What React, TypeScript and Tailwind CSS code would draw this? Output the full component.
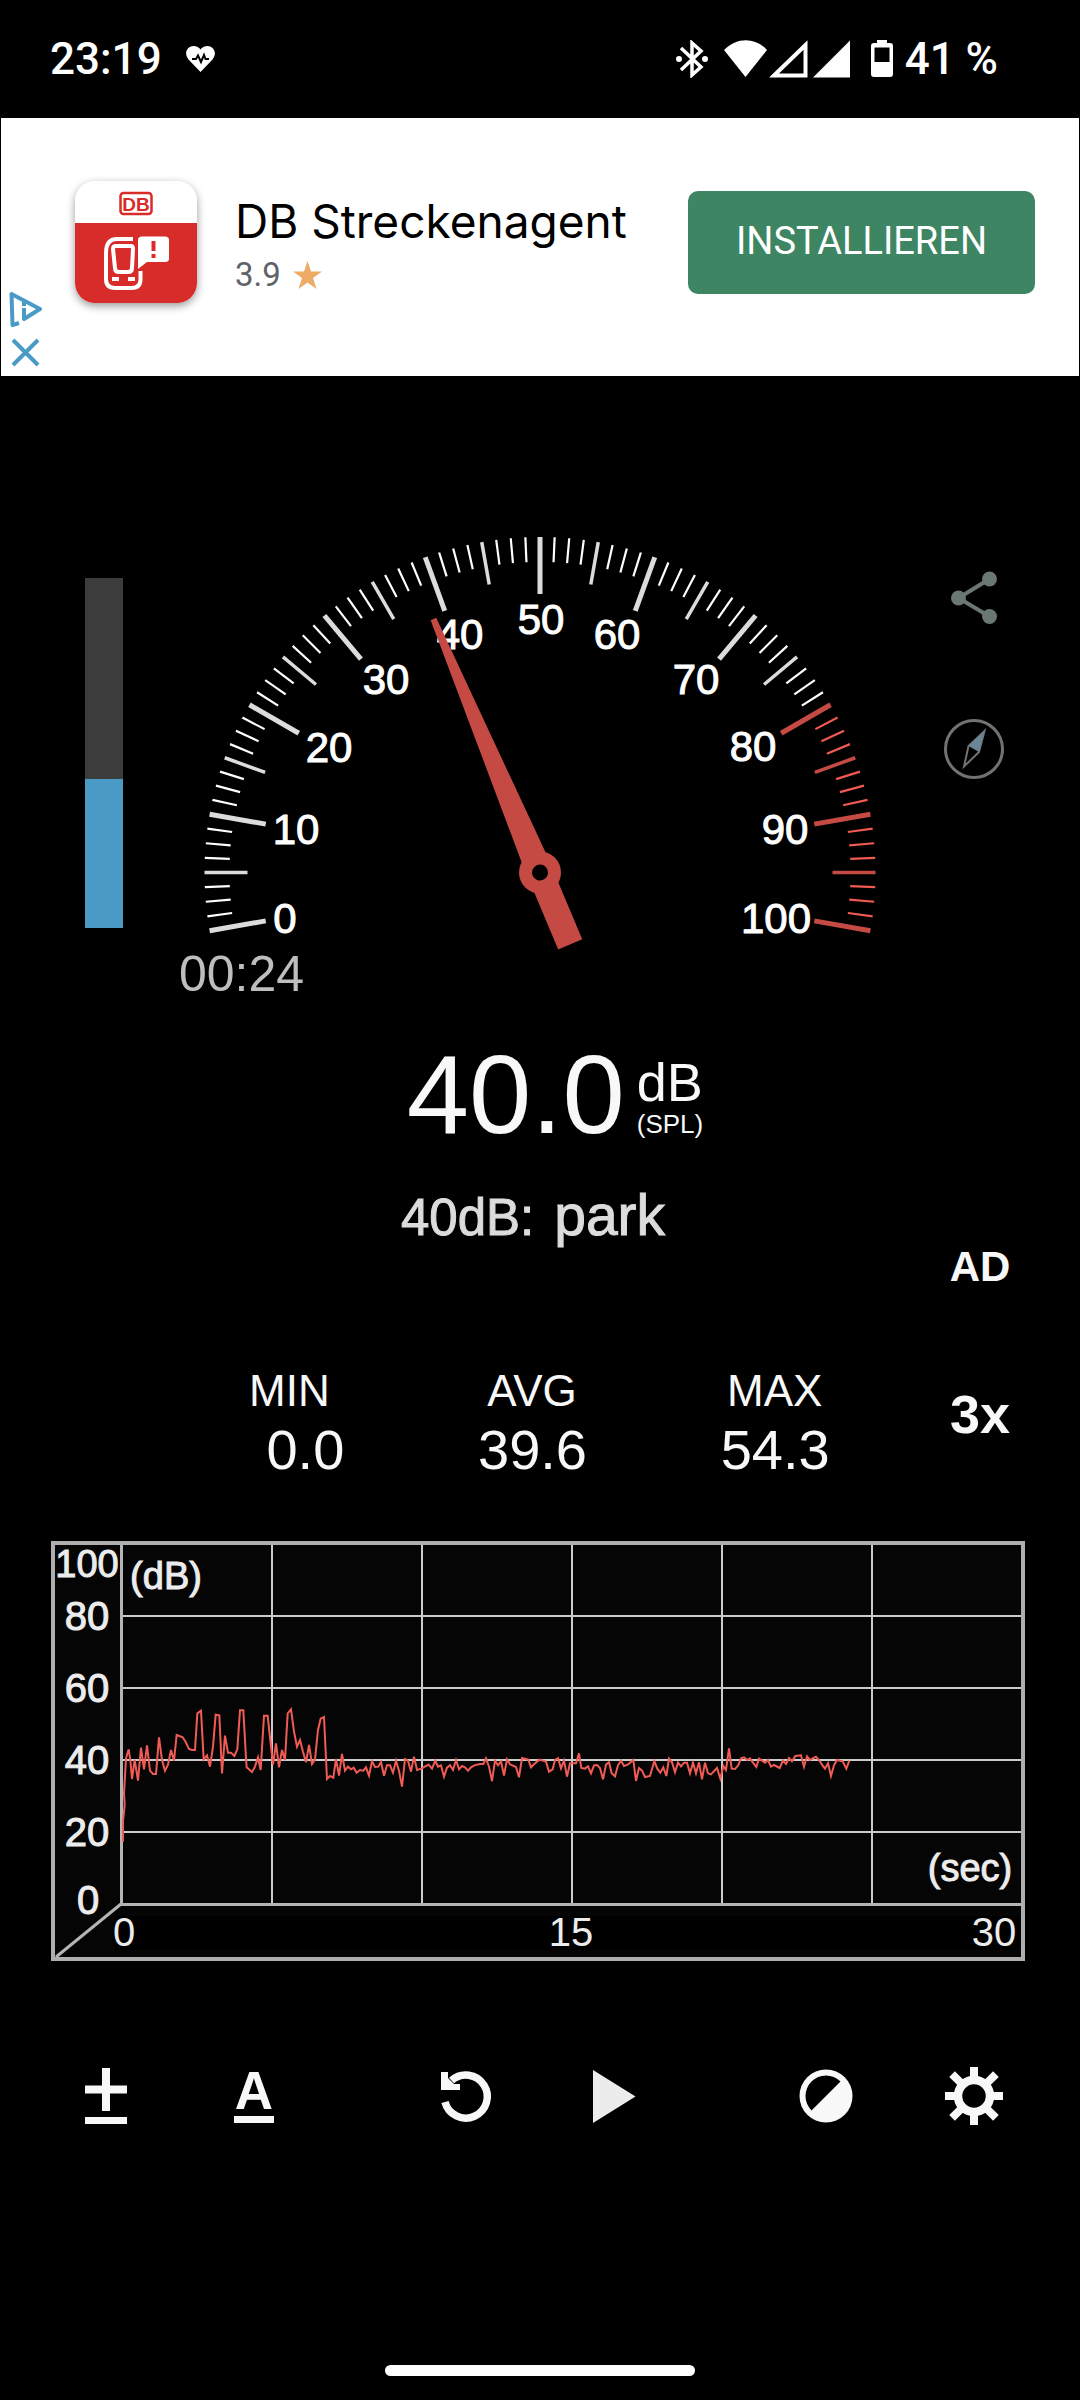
import type { ReactNode } from "react";

const WHITE = "#f8f8f8";
const RED = "#c64a44";

const gaugeLabels = [
  { text: "0", x: 285, y: 933 },
  { text: "10", x: 296, y: 844 },
  { text: "20", x: 329, y: 762 },
  { text: "30", x: 386, y: 694 },
  { text: "40", x: 460, y: 649 },
  { text: "50", x: 541, y: 634 },
  { text: "60", x: 617, y: 649 },
  { text: "70", x: 696, y: 694 },
  { text: "80", x: 753, y: 761 },
  { text: "90", x: 785, y: 844 },
  { text: "100", x: 776, y: 933 },
];

const stats = [
  { label: "MIN", value: "0.0" },
  { label: "AVG", value: "39.6" },
  { label: "MAX", value: "54.3" },
];

// recorded levels, three units per chart pixel
const trace =
  "249,935 249,875 254,825 252,790 258,685 266,658 271,690 276,747 284,690 294,752 303,653 312,718 321,646 330,722 339,732 348,732 357,622 366,690 375,722 384,704 393,660 402,692 410,615 428,622 437,636 447,657 456,660 465,660 472,550 483,542 491,688 501,676 510,710 519,650 527,554 538,556 546,730 555,617 564,668 573,668 583,678 592,658 600,541 610,541 618,684 620,712 636,726 645,710 654,682 662,720 672,557 683,557 690,622 699,704 708,640 717,712 726,660 735,690 743,550 753,538 762,604 771,650 780,630 789,665 798,697 807,645 816,702 825,688 834,600 842,566 852,561 861,747 870,738 880,743 888,687 897,737 906,672 915,722 924,710 933,718 941,713 950,728 960,720 970,722 978,712 987,737 996,694 1005,711 1015,710 1023,696 1032,737 1041,706 1050,706 1059,728 1068,692 1077,722 1086,770 1095,687 1104,692 1113,725 1122,680 1131,720 1146,715 1158,708 1166,704 1176,716 1186,692 1194,710 1203,706 1212,740 1221,713 1230,706 1239,720 1248,690 1257,718 1266,708 1275,712 1284,722 1293,712 1303,706 1320,702 1330,702 1338,685 1347,710 1356,753 1365,692 1374,706 1383,694 1392,737 1401,688 1410,703 1428,711 1437,742 1446,684 1465,689 1473,712 1482,703 1498,689 1518,695 1527,725 1538,718 1545,690 1554,685 1563,715 1572,692 1581,740 1590,700 1608,700 1617,670 1624,714 1635,716 1644,709 1653,730 1662,706 1671,705 1680,714 1689,748 1698,704 1707,697 1715,730 1725,739 1734,706 1743,692 1752,708 1763,704 1780,690 1788,753 1797,714 1806,722 1815,741 1830,738 1843,694 1852,716 1861,728 1870,712 1879,738 1887,686 1896,697 1905,727 1914,698 1923,709 1932,698 1941,698 1950,730 1959,698 1968,730 1977,697 1986,748 1995,698 2004,730 2013,733 2031,714 2041,746 2050,708 2058,720 2067,655 2075,716 2085,717 2095,706 2103,685 2112,682 2122,690 2130,685 2139,698 2149,711 2157,686 2175,698 2184,690 2193,710 2202,705 2219,714 2229,692 2238,702 2247,684 2256,694 2266,678 2283,676 2292,710 2301,679 2310,690 2328,680 2337,690 2346,704 2355,716 2364,700 2373,738 2382,706 2391,690 2408,694 2419,716 2428,692";

const StatusBar = () => (
  <header className="flex items-center justify-between pt-8 pb-8 pl-[50px] pr-[82px] font-['Roboto',sans-serif] text-[44px] leading-[54px] font-medium text-white">
    <div className="flex items-center gap-6">
      <span>23:19</span>
      <svg width="29" height="26" viewBox="0 0 29 26">
        <path d="M14.500 26 L2.500 13.500 C-3 6.500 2 0 7.500 0 C10.500 0 13 1.500 14.500 3.500 C16 1.500 18.500 0 21.500 0 C27 0 32 6.500 26.500 13.500 Z" fill="#fff" />
        <path d="M6 13 H10 L12 9.500 L15 16 L18 9 L19.500 13 H23" fill="none" stroke="#000" strokeWidth="2" />
      </svg>
    </div>
    <div className="flex items-center">
      <svg width="32" height="38" viewBox="0 0 32 38">
        <path d="M5 8 L25 27 L16 35 V3 L25 11 L5 30" fill="none" stroke="#fff" strokeWidth="3.500" />
        <circle cx="3" cy="19" r="3" fill="#fff" />
        <circle cx="29" cy="19" r="3" fill="#fff" />
      </svg>
      <svg className="ml-4" width="127" height="38" viewBox="0 0 127 38">
        <path d="M0 10 C13 -3 31 -3 43 10 L21.500 37 Z" fill="#fff" />
        <path d="M50 35.500 L81.500 5 V35.500 Z" fill="none" stroke="#fff" strokeWidth="4" />
        <path d="M89 37.500 L126 0.500 V37.500 Z" fill="#fff" />
      </svg>
      <svg className="ml-5" width="22" height="38" viewBox="0 0 22 38">
        <path fillRule="evenodd" d="M6 0 H16 V3 H19 Q22 3 22 6 V34 Q22 37 19 37 H3 Q0 37 0 34 V6 Q0 3 3 3 H6 Z M3.500 7.500 V22 H18.500 V7.500 Z" fill="#fff" />
      </svg>
      <span className="ml-3">41 %</span>
    </div>
  </header>
);

const AdBanner = () => (
  <aside className="relative mx-px flex items-start bg-white pt-[63px] pb-[73px] pl-[74px] pr-11 font-['Roboto',sans-serif]">
    <svg className="shrink-0 rounded-[20px] shadow-[0_3px_8px_rgba(0,0,0,0.4)]" width="122" height="122" viewBox="0 0 122 122" role="img" aria-label="DB Streckenagent">
      <rect width="122" height="122" fill="#fff" />
      <rect y="42" width="122" height="80" fill="#d82c2a" />
      <rect x="45.500" y="12" width="31" height="21" rx="3" fill="none" stroke="#d82c2a" strokeWidth="2.500" />
      <text x="61" y="29.500" textAnchor="middle" fontFamily="Liberation Sans, sans-serif" fontWeight="bold" fontSize="19" fill="#d82c2a">DB</text>
      <path d="M58 58 H42 Q31 58 31 72 V98 Q31 107 40 107 H57 Q65.500 107 65.500 98 V90" fill="none" stroke="#fff" strokeWidth="4" />
      <path d="M41 65 H56 Q58 65 58 68 L57 87 Q57 91 53 91 H44 Q40 91 40 87 L38 68 Q38 65 41 65 Z" fill="none" stroke="#fff" strokeWidth="4" />
      <path d="M37 98 H44 M53 98 H60" stroke="#fff" strokeWidth="4" />
      <path d="M67 55.500 H90 Q94 55.500 94 59 V78 Q94 81 90 81 H72 L63 88 V59 Q63 55.500 67 55.500 Z" fill="#fff" />
      <path d="M78.500 60 V70 M78.500 73 V77" stroke="#d82c2a" strokeWidth="4" />
    </svg>
    <div className="ml-[38px] mt-4">
      <div className="font-['Inter',sans-serif] text-[46px] leading-[48px] text-black">DB Streckenagent</div>
      <div className="mt-[10px] flex items-center gap-3 text-[33px] leading-10 text-[#5f6368]">
        3.9
        <svg width="29" height="28" viewBox="0 0 29 28">
          <path d="M14.500 0 L18 10.500 H29 L20 17 L23.500 28 L14.500 21.500 L5.500 28 L9 17 L0 10.500 H11 Z" fill="#edab66" />
        </svg>
      </div>
    </div>
    <button className="ml-auto mt-[10px] rounded-[10px] bg-[#3d8563] px-12 pt-7 pb-[31px] text-[38px] leading-[44px] text-white">INSTALLIEREN</button>
    <a href="#adchoices" aria-label="AdChoices" className="absolute bottom-[49px] left-2">
      <svg className="block" width="34" height="36" viewBox="0 0 34 36" fill="none" stroke="#4a9ac6" strokeWidth="4">
        <path d="M10 32 L3.500 34 L2.500 3 L31 18 L15 28 V17" strokeLinejoin="round" />
        <path d="M15 11 V15" />
      </svg>
    </a>
    <button aria-label="Close" className="absolute bottom-[9px] left-[10px]">
      <svg className="block" width="29" height="29" viewBox="0 0 29 29">
        <path d="M2 2 L27 27 M27 2 L2 27" stroke="#4a9ac6" strokeWidth="4" />
      </svg>
    </button>
  </aside>
);

const Gauge = () => (
  <svg className="block w-full overflow-visible" viewBox="179 530 722 426" role="img" aria-label="38.6 dB">
    {Array.from({ length: 81 }, (_, i) => {
      const major = i % 8 === 0;
      const mid = i % 4 === 0;
      const red = i >= 64;
      return (
        <line
          key={i}
          x1="540"
          x2="540"
          y1="537"
          y2={major ? 594 : mid ? 580 : 562}
          stroke={red ? (mid ? RED : "#f05a52") : mid ? "#dcdcdc" : "#fff"}
          strokeWidth={major ? 5 : mid ? 3.5 : 2.2}
          transform={`rotate(${-100 + i * 2.5} 540 872.5)`}
        />
      );
    })}
    {gaugeLabels.map((l) => (
      <text key={l.text} x={l.x} y={l.y} textAnchor="middle" fontFamily="Liberation Sans, sans-serif" fontSize="42" fill="#fff" stroke="#fff" strokeWidth="1">
        {l.text}
      </text>
    ))}
    <g transform="translate(540 872.5) rotate(-22.8)">
      <polygon points="-3,-275 3,-275 13,-14 13,78 -13,78 -13,-14" fill={RED} />
      <circle r="21" fill={RED} />
      <circle r="8" fill="#000" />
    </g>
  </svg>
);

const LevelChart = () => (
  <svg className="block w-full" viewBox="51 1541 974 420" role="img" aria-label="Sound level over time">
    <rect x="53" y="1543" width="970" height="416" fill="#050505" stroke="#aeaeae" strokeWidth="4" />
    <rect x="114" y="1916" width="905" height="34" fill="#000" />
    <path d="M272 1545 V1904 M422 1545 V1904 M572 1545 V1904 M722 1545 V1904 M872 1545 V1904 M122 1616 H1021 M122 1688 H1021 M122 1760 H1021 M122 1832 H1021" stroke="#cbcbcb" strokeWidth="2" />
    <path d="M121.500 1545 V1904.500 H1021 M121 1904 L56 1957" fill="none" stroke="#b4b4b4" strokeWidth="3" />
    <g transform="translate(40 1530) scale(0.33333)">
      <polyline points={trace} fill="none" stroke="#f05c55" strokeWidth="6" />
    </g>
    <g fontFamily="Liberation Sans, sans-serif" fontSize="40" fill="#ececec" textAnchor="middle">
      <g stroke="#ececec" strokeWidth="1">
        <text x="87" y="1577" fontSize="38">100</text>
        <text x="87" y="1630">80</text>
        <text x="87" y="1702">60</text>
        <text x="87" y="1774">40</text>
        <text x="87" y="1846">20</text>
        <text x="88" y="1914">0</text>
        <text x="166" y="1589" fontSize="38">(dB)</text>
        <text x="970" y="1881" fontSize="38">(sec)</text>
      </g>
      <text x="124" y="1946">0</text>
      <text x="571" y="1946">15</text>
      <text x="994" y="1946">30</text>
    </g>
  </svg>
);

const IconButton = ({ label, children }: { label: string; children: ReactNode }) => (
  <button aria-label={label} className="block size-[60px] shrink-0">
    <svg className="block size-full" viewBox="-30 -30 60 60">
      {children}
    </svg>
  </button>
);

const Toolbar = () => (
  <nav className="mt-[105px] flex justify-between px-[76px]">
    <div className="flex gap-[88px]">
      <IconButton label="Calibrate">
        <path d="M0 -28 V15 M-21 -6.500 H21" stroke={WHITE} strokeWidth="8" />
        <path d="M-21 24.500 H21" stroke={WHITE} strokeWidth="7" />
      </IconButton>
      <IconButton label="Weighting">
        <text x="0" y="13" textAnchor="middle" fontFamily="Liberation Sans, sans-serif" fontWeight="bold" fontSize="53" fill={WHITE}>A</text>
        <path d="M-20 23.500 H20" stroke={WHITE} strokeWidth="7" />
      </IconButton>
    </div>
    <div className="flex gap-[88px]">
      <IconButton label="Reset">
        <path d="M-14.500 -15.500 A21.500 21.500 0 1 1 -21 6" fill="none" stroke={WHITE} strokeWidth="7.500" />
        <path d="M-25 -24 H-18 V-18 L-12 -12 H-6 V-6 H-25 Z" fill={WHITE} />
      </IconButton>
      <IconButton label="Start">
        <path d="M-21 -26 L21.500 0.500 L-21 27 Z" fill="#ececec" />
      </IconButton>
    </div>
    <div className="flex gap-[88px]">
      <IconButton label="Contrast">
        <circle r="26.500" fill={WHITE} />
        <path d="M-14.500 14.500 A20.500 20.500 0 0 1 14.500 -14.500 Z" fill="#000" />
      </IconButton>
      <IconButton label="Settings">
        <circle r="16" fill="none" stroke={WHITE} strokeWidth="8.500" />
        {[0, 45, 90, 135, 180, 225, 270, 315].map((a) => (
          <rect key={a} x="-4" y={a % 90 === 0 ? -29 : -31} width="8" height="13" fill={WHITE} transform={`rotate(${a})`} />
        ))}
      </IconButton>
    </div>
  </nav>
);

export default function App() {
  return (
    <div className="flex min-h-screen flex-col bg-black font-['Liberation_Sans',sans-serif] text-[#f8f8f8]">
      <StatusBar />
      <AdBanner />

      <main>
        <section className="flex items-start pt-[154px] pl-[85px] pr-[76px]">
          <div className="mt-12 flex h-[350px] w-[38px] shrink-0 flex-col justify-end bg-[#3c3c3c]">
            <div className="h-[149px] bg-[#4a9ac6]" />
          </div>
          <div className="ml-14 mr-[43px] flex-1">
            <Gauge />
            <div className="text-[50px] leading-9 text-[#bebebe]">00:24</div>
          </div>
          <div className="mt-[38px] flex flex-col gap-[91px]">
            <IconButton label="Share">
              <path d="M15.500 -19 L-15.500 0 L15.500 18.500" fill="none" stroke="#6b7774" strokeWidth="4" />
              <g fill="#6b7774">
                <circle cx="-15.500" cy="0" r="7.500" />
                <circle cx="15.500" cy="-19" r="7.500" />
                <circle cx="15.500" cy="18.500" r="7.500" />
              </g>
            </IconButton>
            <IconButton label="Compass">
              <circle r="28.500" fill="none" stroke="#707274" strokeWidth="3" />
              <path d="M10.500 -18 L-5.500 -3 L-10 17.500 L5 3 Z" fill="none" stroke="#707274" strokeWidth="2" />
              <path d="M10.500 -18 L-5.500 -3 L5 3 Z" fill="#6a8598" />
            </IconButton>
          </div>
        </section>

        <section className="mt-[45px] flex justify-center gap-3 pl-[30px]">
          <span className="text-[112px] leading-[116px]">40.0</span>
          <div className="flex flex-col gap-0.5 pt-[18px]">
            <span className="text-[54px] leading-[54px]">dB</span>
            <span className="text-[26px] leading-[26px]">(SPL)</span>
          </div>
        </section>

        <p className="mt-[35px] flex items-baseline justify-center gap-5 pr-[14px] leading-[54px] text-[#dcdcdc] [-webkit-text-stroke:1px_#dcdcdc]">
          <span className="text-[51px]">40dB:</span>
          <span className="text-[57px]">park</span>
        </p>

        <section className="flex items-start pl-[168px] pr-4">
          <dl className="grid flex-1 grid-cols-3 pt-[124px]">
            {stats.map((s) => (
              <div key={s.label} className="flex flex-col items-center gap-2">
                <dt className="text-[44px] leading-[44px]">{s.label}</dt>
                <dd className="w-[110px] text-right text-[56px] leading-[58px]">{s.value}</dd>
              </div>
            ))}
          </dl>
          <div className="flex w-[168px] flex-col items-center gap-[98px] font-bold">
            <button className="text-[42px] leading-[44px]">AD</button>
            <button className="text-[54px] leading-[54px]">3x</button>
          </div>
        </section>

        <section className="mt-[62px] pl-[51px] pr-[55px]">
          <LevelChart />
        </section>

        <Toolbar />
      </main>

      <footer className="mt-auto flex justify-center pb-6">
        <div className="h-[11px] w-[310px] rounded-full bg-white" />
      </footer>
    </div>
  );
}
